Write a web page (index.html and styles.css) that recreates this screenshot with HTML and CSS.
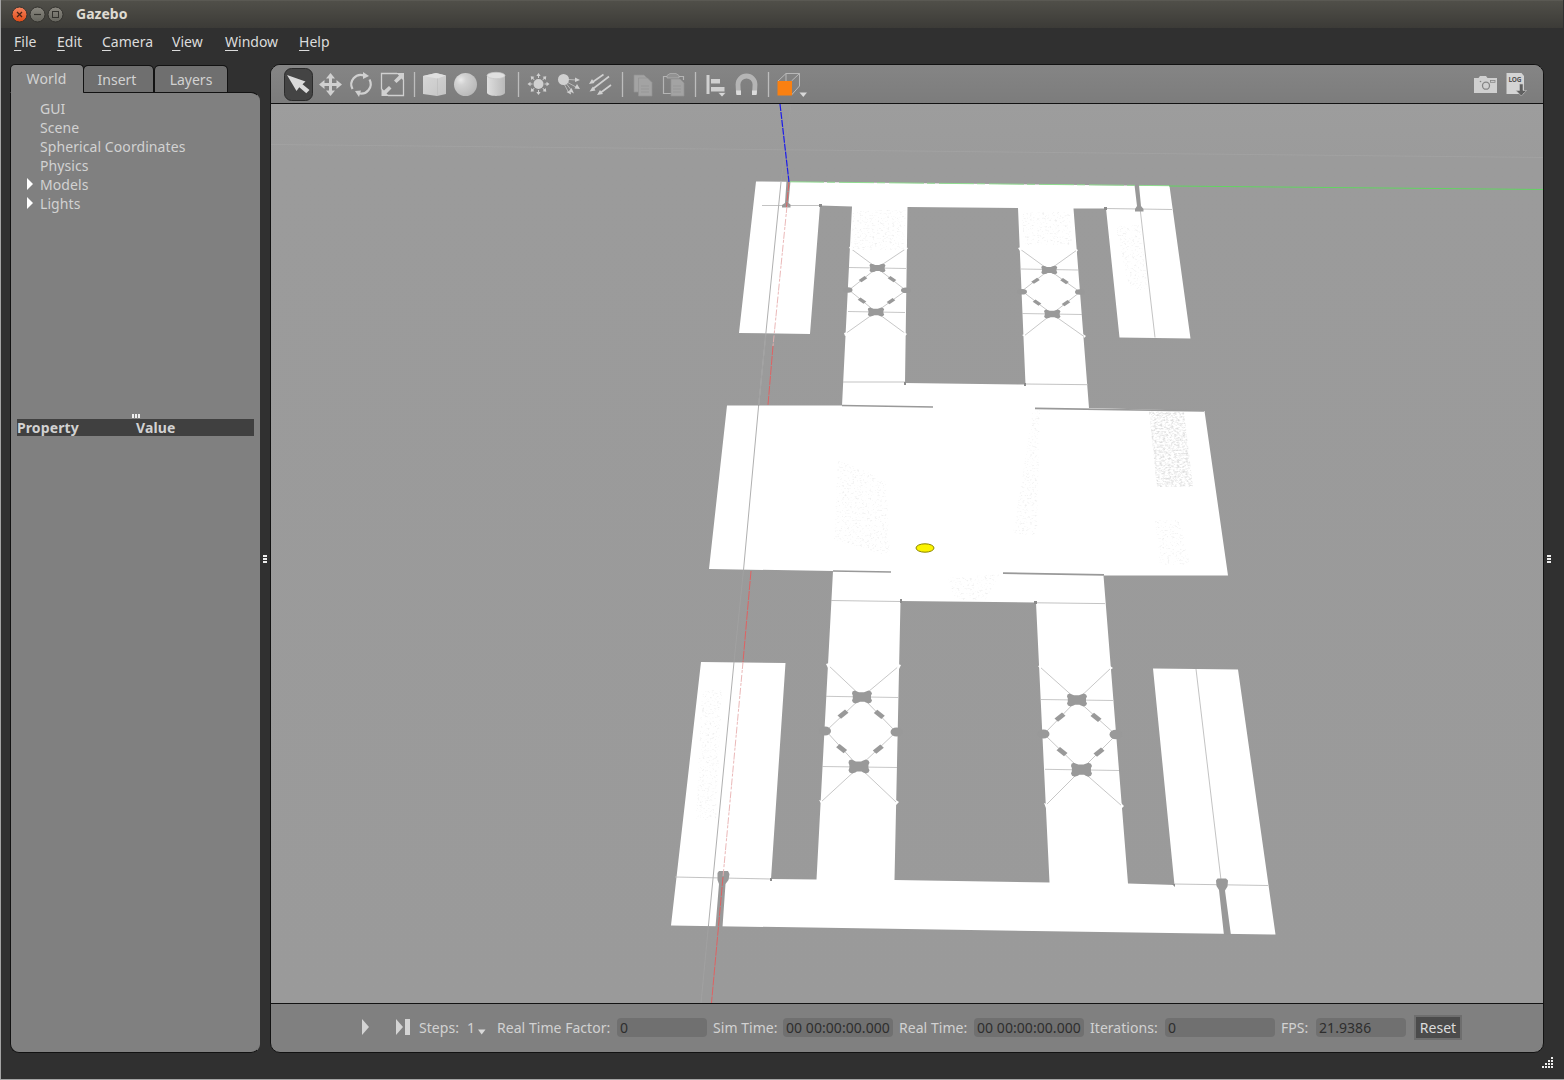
FILE: index.html
```html
<!DOCTYPE html>
<html lang="en">
<head>
<meta charset="utf-8">
<title>Gazebo</title>
<link rel="stylesheet" href="styles.css">
</head>
<body>
<div class="window">
  <header class="titlebar">
    <svg class="buttons" width="56" height="18" viewBox="0 0 56 18">
      <defs>
        <linearGradient id="close" x2="0" y2="1"><stop stop-color="#f58560"/><stop offset="1" stop-color="#df4a16"/></linearGradient>
        <linearGradient id="btn" x2="0" y2="1"><stop stop-color="#8a8880"/><stop offset="1" stop-color="#65645d"/></linearGradient>
      </defs>
      <circle cx="9.500" cy="9.500" r="7.500" fill="url(#close)" stroke="#33322e"/>
      <path d="M7 7l5 5M12 7l-5 5" stroke="#4a2417" stroke-width="1.300"/>
      <circle cx="27.500" cy="9.500" r="7.500" fill="url(#btn)" stroke="#33322e"/>
      <path d="M24 9.500h7" stroke="#33322e" stroke-width="1.200"/>
      <circle cx="45.500" cy="9.500" r="7.500" fill="url(#btn)" stroke="#33322e"/>
      <rect x="42.500" y="6.500" width="6" height="6" fill="none" stroke="#33322e"/>
    </svg>
    <span class="title">Gazebo</span>
  </header>
  <nav class="menubar">
    <span class="m-file"><u>F</u>ile</span><span class="m-edit"><u>E</u>dit</span><span class="m-camera"><u>C</u>amera</span><span class="m-view"><u>V</u>iew</span><span class="m-window"><u>W</u>indow</span><span class="m-help"><u>H</u>elp</span>
  </nav>
  <main class="workspace">
    <aside class="side">
      <div class="tabs">
        <div class="tab active">World</div>
        <div class="tab insert">Insert</div>
        <div class="tab layers">Layers</div>
      </div>
      <div class="panel">
        <ul class="tree">
          <li>GUI</li>
          <li>Scene</li>
          <li>Spherical Coordinates</li>
          <li>Physics</li>
          <li class="branch">Models</li>
          <li class="branch">Lights</li>
        </ul>
        <div class="grip-h"><i></i><i></i><i></i></div>
        <div class="props"><span class="p-name">Property</span><span class="p-value">Value</span></div>
      </div>
    </aside>
    <div class="splitter"><i></i><i></i><i></i></div>
    <section class="render">
      <div class="toolbar">
        <svg width="1272" height="38" viewBox="271 65 1272 38">
          <defs>
            <linearGradient id="cube" x2="1" y2="1"><stop stop-color="#d8d8d8"/><stop offset="1" stop-color="#c4c4c4"/></linearGradient>
            <radialGradient id="ball" cx=".3" cy=".3" r=".75"><stop stop-color="#e9e9e9"/><stop offset=".3" stop-color="#d2d2d2"/><stop offset="1" stop-color="#b9b9b9"/></radialGradient>
            <linearGradient id="cyl"><stop stop-color="#dedede"/><stop offset="1" stop-color="#b9b9b9"/></linearGradient>
          </defs>
          <!-- select -->
          <rect x="284.500" y="68.500" width="28" height="32" rx="7" fill="#444" stroke="#2b2b2b"/>
          <path d="M287 75l18.500 6.500-3 2.700 7 5.800-3.200 3.200-7-6-2.800 3.800z" fill="#d9d9d9"/>
          <g fill="#d0d0d0" stroke="none">
            <!-- translate -->
            <path d="M330.500 73l4.500 5.500h-3v4.500h4.500v-3l5.500 4.500-5.500 4.500v-3h-4.500v4.500h3l-4.500 5.500-4.500-5.500h3v-4.500h-4.500v3l-5.500-4.500 5.500-4.500v3h4.500v-4.500h-3z"/>
            <!-- rotate -->
            <path d="M352.500 89A9.500 9.500 0 0 1 364 75.500M369.500 79.500A9.500 9.500 0 0 1 358 93" fill="none" stroke="#d0d0d0" stroke-width="2.200"/>
            <path d="M363 72l6 4-6 3zM359 97l-4-6 6-.5z"/>
            <!-- scale -->
            <path d="M397 73.500h-15.500v16M388 95.500h15.500v-16" fill="none" stroke="#d0d0d0" stroke-width="1.300"/>
            <path d="M404 73v8l-2.500-2.500-5 4.500-2.500-2.500 5-5L396 73zM381.500 96v-8l2.500 2.500 5-4.500 2.500 2.500-5 5 3 2.500z"/>
          </g>
          <path d="M414.500 72v25M518.500 72v25M622.500 72v25M695.500 72v25M768.500 72v25" stroke="#bdbdbd" stroke-width="1.300"/>
          <!-- shapes -->
          <path d="M423 76l13-3 10 2.500v18.500l-9 2-14-2z" fill="url(#cube)"/>
          <path d="M423 76l14.500 2.500 8.500-3L436 73z" fill="#e0e0e0"/>
          <path d="M437.500 78.500v17.500" stroke="#bcbcbc" stroke-width=".7"/>
          <circle cx="465.500" cy="84.500" r="11.500" fill="url(#ball)"/>
          <path d="M487 75.500v17c0 4.500 18 4.500 18 0v-17z" fill="url(#cyl)"/>
          <ellipse cx="496" cy="75.500" rx="9" ry="3.200" fill="#e0e0e0" stroke="#c6c6c6" stroke-width=".7"/>
          <!-- lights -->
          <g fill="#d0d0d0">
            <circle cx="538.500" cy="84" r="5"/>
            <path id="ray" d="M538 78v-2h-1.700l2.200-3 2.200 3H539v2z"/>
            <use href="#ray" transform="rotate(45 538.500 84)"/><use href="#ray" transform="rotate(90 538.500 84)"/><use href="#ray" transform="rotate(135 538.500 84)"/>
            <use href="#ray" transform="rotate(180 538.500 84)"/><use href="#ray" transform="rotate(225 538.500 84)"/><use href="#ray" transform="rotate(270 538.500 84)"/><use href="#ray" transform="rotate(315 538.500 84)"/>
            <circle cx="563.500" cy="79.500" r="5.500"/>
            <path d="M563 79l13 1M565 81l11 6M565 82l7 9M563 82l6 11" stroke="#d0d0d0" stroke-width=".7"/>
            <path d="M575 77.500l5 2.500-5 2zM577 84l3 5-5.500-.5zM571.500 88l2.500 5.500-5-2.500zM566.500 92l4-1.500.5 4z"/>
            <path d="M603.500 74.500L592 82.500M609 76.500L592 89.500M611 85l-11.500 8.500" stroke="#d0d0d0" stroke-width="1.600"/>
            <path d="M589 84l3-5 2.500 4zM589.500 91.500l3.500-5 2.500 4zM597 95l3-5 3 4z"/>
          </g>
          <!-- copy and paste -->
          <g fill="#a3a3a3" stroke="#929292" stroke-width=".7">
            <path d="M634 75h10l3 3v14h-13z"/><path d="M638.500 78h9l4.500 4.500V96h-13.500z"/>
            <path d="M641 86h8M641 89h8M641 92h8" />
            <path d="M672 93.500h-8.500V76.500h20V80" fill="none" stroke="#b5b5b5" stroke-width="1.200"/>
            <path d="M667 78v-2.500l3-2h6l3 2V78z" fill="#929292" stroke="#b5b5b5"/>
            <path d="M671 79h9l4 4v13h-13z"/><path d="M673 86h8M673 89h8M673 92h8"/>
          </g>
          <!-- align and snap -->
          <path d="M706.500 75h3v19h-3zM711 79h9v4.500h-9zM711 87h13.500v4.500H711z" fill="#d0d0d0"/>
          <path d="M718 92.500h8l-4 4.500z" fill="#d8d8d8" stroke="#777" stroke-width=".6"/>
          <path d="M738.500 94l-.5-9.500a8.500 8.500 0 0 1 17 0l-.5 9.500" fill="none" stroke="#b5b5b5" stroke-width="4.800"/>
          <path d="M736 90.500h5v4.500h-4.500zM752 90.500h5l-.5 4.500H752z" fill="#dcdcdc"/>
          <!-- view angle -->
          <path d="M778 81l8-7.500h13.500V86l-8 9M791.500 81l8-7.500M786 73.500V81" fill="none" stroke="#b8b8b8"/>
          <rect x="777.500" y="81" width="14.500" height="14.500" fill="#fa8011"/>
          <path d="M799.500 92.500h7.500l-3.700 4.500z" fill="#d8d8d8"/>
          <!-- screenshot -->
          <path d="M1474 78h4.500l1.500-2h6l1.500 2h9.500v15h-23z" fill="#d0d0d0"/>
          <circle cx="1486" cy="85.700" r="3.500" fill="none" stroke="#858585" stroke-width="1.300"/>
          <rect x="1490.500" y="80.500" width="4.500" height="1.800" fill="none" stroke="#858585" stroke-width=".8"/><circle cx="1480.500" cy="81.500" r=".8" fill="#858585"/>
          <!-- log -->
          <path d="M1506.500 73h15l2.500 3v18h-17.500z" fill="#d4d4d4"/>
          <text x="1508.500" y="82" class="log" textLength="13">LOG</text>
          <path d="M1519.500 84h3.500v6.500h3.500l-5.200 5.500-5.300-5.500h3.500z" fill="#606060" stroke="#c4c4c4" stroke-width=".6"/>
        </svg>
      </div>
      <svg class="scene" width="1272" height="899" viewBox="271 104 1272 899">
        <defs>
          <linearGradient id="sky" x2="0" y2="1"><stop stop-color="#9d9d9d"/><stop offset=".06" stop-color="#9b9b9b"/><stop offset="1" stop-color="#9a9a9a"/></linearGradient>
          <path id="pillar" d="M-9.500-5.500l2-1 2.500 1 2 .8h5l2-.8 2.500-1 2.500 1 1 2-1 2v3l1 2-1 2-2.500 1-2.500-1-1.500-.8h-4.500l-1.500.8-3 1-2.500-1-1-2 .8-2v-3l-.8-2z"/>
          <path id="brick" d="M-5.500 1.500L2-4.500 5.500-1.200-2 4.800z"/>
          <path id="brick-r" d="M5.500 1.500L-2-4.500-5.500-1.200 2 4.800z"/>
          <filter id="grain" x="0" y="0" width="1" height="1"><feTurbulence type="fractalNoise" baseFrequency=".35 .6" numOctaves="3" seed="4"/><feColorMatrix values="0 0 0 0 .6  0 0 0 0 .6  0 0 0 0 .6  2.800 0 0 0 -1.150"/><feComposite in2="SourceGraphic" operator="in"/></filter>
          <filter id="dust" x="0" y="0" width="1" height="1"><feTurbulence type="fractalNoise" baseFrequency=".4 .6" numOctaves="2" seed="9"/><feColorMatrix values="0 0 0 0 .7  0 0 0 0 .7  0 0 0 0 .7  4 0 0 0 -2.250"/><feComposite in2="SourceGraphic" operator="in"/></filter>
        </defs>
        <rect x="271" y="104" width="1272" height="899" fill="url(#sky)"/>
        <path d="M271 144.500L1543 157.500" stroke="#a3a3a3" stroke-width=".8"/>
        <path d="M791 104L781 182" stroke="#a0a0a0" stroke-width=".8"/>
        <!-- floor slab with two courtyards -->
        <path fill="#fff" fill-rule="evenodd" d="M756 181.500L1169.500 186 1190.500 338.500 1119.500 337.500 1106 208.500H1073.500L1089 408 1204.500 411 1228 575.500 1103.500 575.500 1128 883.500 1174.500 885 1153 668.500 1238 669.500 1275.500 934.500 671 925.500 701 662 785.500 663 771 879 816.500 879.500 833 571 709 569 727 405.500 842 405.500 852 206.500 820 205.500 810 334 739 333z
          M907.500 207L1018 208 1025.500 384.500 905 383z M900.500 601L1036 602.500 1049.500 882.500 894.500 880z"/>
        <path filter="url(#grain)" fill="#fff" opacity=".62" d="M1149 411.500L1184 412 1193 487H1157z"/>
        <g filter="url(#dust)" fill="#fff" opacity=".4">
          <path d="M1033 410H1040L1037 535H1013z"/><path d="M838 460L886 480 890 556 834 540z"/><path d="M853 210L906 210 904 250H851z"/><path d="M948 578L1000 574 985 600H955z"/><path d="M702 690L722 690 716 820H696z"/><path d="M1155 520L1180 520 1190 565H1160z"/><path d="M1115 225L1140 225 1148 290H1130z"/><path d="M1022 212L1070 212 1072 245H1024z"/>
        </g>
        <g stroke="#999" fill="none" stroke-width="1.700">
          <path d="M842 405.500L933 407M1035 408.300L1204 411M833 571L891 572M1003 573.200L1104 574.800"/>
        </g>
        <g stroke="#bcbcbc" fill="none" stroke-width=".9">
          <path d="M843 382H905M1025 384L1088 384.700M831 600.500L900 601.500M1037 602.800L1105 603.600M762 205.500H820M1106 208.500L1172 209.500M675 877L771 879M1174 884L1268 885.500"/>
          <path d="M1140 208L1155 337.500M1196 669L1221 880"/>
        </g>
        <g fill="#8c8c8c"><path d="M819 204h3v3h-3zM1104 207h3v3h-3zM904 382h2v3h-2zM1024 383h2v3h-2zM900 599h2v4h-2zM1034 601h3v3h-3zM770 878h2v3h-2zM1172 884h3v3z"/></g>
        <!-- seams around the columns -->
        <g stroke="#bdbdbd" fill="none" stroke-width=".85">
          <path d="M850 248L877 268 907 248M849 267.500L906 268.500M877 268L849 290 876 312 906 290.500zM848 311.500L905 312.500M845 334L876 312 906 334"/>
          <path d="M1020 249L1049 270 1077 250M1021 269L1078 270M1049 270L1022 291 1052 314 1080 292zM1022 313.500L1082 314.500M1024 336L1052 314 1084 336.500"/>
          <path d="M828 665L862 697 899 666M826 696.300L898 697.500M862 697L826 731 859 767 896 732zM822 766.500L897 767.500M821 802L859 767 896 802"/>
          <path d="M1040 667L1077 700 1111 668M1041 699.500L1113 700.500M1077 700L1044 734 1081 770 1116 735zM1045 769.300L1119 770.500M1046 805L1081 770 1122 806"/>
        </g>
        <g fill="#fff">
          <path d="M849 247l3-1 2 3-3 2zM905 247l3 1-2 3-2-1zM844 333l3-1 1 3-3 1zM904 332l3 2-2 2-2-2zM1018 248l3-1 1 3-2 1zM1076 249l2 1-2 3zM1022 335l3-1v3zM1083 334l3 2-2 2zM826 664l3-1 2 3-3 2zM898 664l3 1-2 4-2-1zM819 800l3 1v4zM896 800l3 2-3 3zM1038 666l3-1v5zM1110 666l3 2-3 2zM1044 803l3 1-1 4zM1121 803l3 3-3 3z"/>
        </g>
        <g fill="#999">
          <use href="#pillar" transform="translate(877.500 268) scale(.8 .66)"/><use href="#pillar" transform="translate(876 312) scale(.82 .68)"/>
          <use href="#pillar" transform="translate(1049.300 270) scale(.8 .66)"/><use href="#pillar" transform="translate(1052.300 314) scale(.82 .68)"/>
          <use href="#pillar" transform="translate(862 697)"/><use href="#pillar" transform="translate(859 766.500) scale(1.050 1.080)"/>
          <use href="#pillar" transform="translate(1077 700)"/><use href="#pillar" transform="translate(1081.500 769.700) scale(1.050 1.080)"/>
          <use href="#brick" transform="translate(863 279) scale(.78 .66)"/><use href="#brick-r" transform="translate(892 279) scale(.78 .66)"/><use href="#brick-r" transform="translate(862 300.500) scale(.78 .66)"/><use href="#brick" transform="translate(891 301) scale(.78 .66)"/>
          <use href="#brick" transform="translate(1035.500 280.700) scale(.78 .66)"/><use href="#brick-r" transform="translate(1064.500 281) scale(.78 .66)"/><use href="#brick-r" transform="translate(1037 302.500) scale(.78 .66)"/><use href="#brick" transform="translate(1066 303) scale(.78 .66)"/>
          <use href="#brick" x="843" y="714"/><use href="#brick-r" x="879.300" y="714.300"/><use href="#brick-r" x="841.600" y="748.500"/><use href="#brick" x="878.300" y="749"/>
          <use href="#brick" x="1060" y="717"/><use href="#brick-r" x="1096" y="717.300"/><use href="#brick-r" x="1062" y="751.500"/><use href="#brick" x="1099" y="752"/>
          <ellipse cx="848" cy="290" rx="4.500" ry="2.800"/><ellipse cx="906" cy="290.300" rx="5" ry="2.800"/><ellipse cx="1022" cy="291.700" rx="5" ry="2.800"/><ellipse cx="1080" cy="292" rx="5" ry="2.800"/>
          <ellipse cx="825" cy="731" rx="6" ry="4.500"/><ellipse cx="896.500" cy="732" rx="6" ry="4.500"/><ellipse cx="1043.500" cy="734" rx="6" ry="4.500"/><ellipse cx="1116" cy="734.500" rx="6.500" ry="4.800"/>
          <!-- door slots -->
          <path d="M786.500 181L790.500 181 788.500 203 790.500 204.500V207.500H782V205L785 203z"/>
          <path d="M1134.500 185L1139 185 1141 206 1143.500 209V211.500H1135V209L1137 206z"/>
          <path d="M717.500 873l1.500-2h9l1.500 3-1 6-3 4L722.500 927H715.500L719 884l-1.500-4z"/>
          <path d="M1216 880.500l1.500-2h8.500l2 2-.5 6-2.500 4L1231 935.500H1224L1219 890l-2.500-4z"/>
        </g>
        <!-- world axes -->
        <path d="M781 182L758.500 407M758.500 407L743.500 570M734 662L708.500 925" stroke="#b0b0b0"/>
        <path d="M766 334L758.500 406M743.500 570L734 662M708.500 925L701 1003" stroke="#a1a1a1"/>
        <path d="M787 206L773 346M743 662L723 877" stroke="#e8b0b0" stroke-width=".9" stroke-dasharray="7 1 3 2"/>
        <path d="M789 182L786.500 207M773 346L768 405M751 571L743 662M723 877L711.500 1003" stroke="#df6262" stroke-dasharray="9 1"/>
        <path d="M789 181.800L1169 185.700" stroke="#8fdc8f" stroke-width="1" stroke-dasharray="35 3 8 4"/>
        <path d="M1169 186L1543 189.500" stroke="#62d462" stroke-width="1"/>
        <path d="M780 104L789 182" stroke="#1b1bea" stroke-width="1.200" stroke-dasharray="7 1"/>
        <ellipse cx="925" cy="548" rx="9" ry="4.200" fill="#fbf300" stroke="#8c8500"/>
      </svg>
      <footer class="timebar">
        <svg width="50" height="16" viewBox="0 0 50 16" fill="#d4d4d4"><path d="M1 0l7 8L1 16zM35 0l7 8L35 16zM44 0h5v16h-5z"/></svg>
        <span class="lbl steps">Steps:</span><span class="lbl one">1</span>
        <svg class="drop" width="9" height="6" viewBox="0 0 9 6"><path d="M0 .5h7.500L3.700 5.500z" fill="#d8d8d8"/></svg>
        <span class="lbl rtf">Real Time Factor:</span><span class="field w90">0</span>
        <span class="lbl sim">Sim Time:</span><span class="field w110">00 00:00:00.000</span>
        <span class="lbl real">Real Time:</span><span class="field w110">00 00:00:00.000</span>
        <span class="lbl iter">Iterations:</span><span class="field w110">0</span>
        <span class="lbl fps">FPS:</span><span class="field w90">21.9386</span>
        <button class="reset">Reset</button>
      </footer>
    </section>
    <div class="splitter right"><i></i><i></i><i></i></div>
  </main>
  <div class="statusbar"><svg width="12" height="12" viewBox="0 0 12 12" fill="#eee"><path d="M9 1h2v2H9zM6 4h2v2H6zM9 4h2v2H9zM3 7h2v2H3zM6 7h2v2H6zM9 7h2v2H9zM0 10h2v2H0zM3 10h2v2H3zM6 10h2v2H6zM9 10h2v2H9z"/></svg></div>
</div>
</body>
</html>
```
FILE: styles.css
```css
* { box-sizing: border-box; }
body { margin: 0; overflow: hidden; background: #a4a4a4; font: 14px "Noto Sans", "Open Sans", sans-serif; color: #d2d2d2; }
.window { width: 1564px; height: 1080px; padding: 0 1px 1px 0; display: flex; flex-direction: column; background: #303030; border: solid #a4a4a4; border-width: 0 0 1px 1px; }
.titlebar { height: 28px; flex: none; display: flex; align-items: center; padding-left: 9px; background: linear-gradient(#504f49, #3c3b37); border-top: 1px solid #5a5953; }
.buttons { flex: none; display: block; margin-top: -1px; }
.title { margin: -2px 0 0 10px; font-weight: 700; color: #dfdbd2; }
.menubar { height: 36px; flex: none; padding-left: 13px; display: flex; line-height: 28px; color: #dcdcdc; white-space: nowrap; }
.menubar u { text-underline-offset: 3px; text-decoration-thickness: 1px; }
.m-file { width: 43px; } .m-edit { width: 45px; } .m-camera { width: 70px; } .m-view { width: 53px; } .m-window { width: 74px; }
.workspace { flex: none; height: 989px; display: flex; padding-left: 9px; }
.side { width: 250px; display: flex; flex-direction: column; }
.tabs { height: 29px; display: flex; align-items: flex-end; position: relative; z-index: 1; }
.tab { height: 28px; padding-top: 1px; line-height: 25px; text-align: center; background: #6f6f6f; border: 1px solid #121212; border-bottom-color: transparent; border-radius: 5px 5px 0 0; background-clip: padding-box; }
.tab.active { width: 74px; height: 29px; line-height: 27px; margin-right: -1px; padding: 0 1px 0 0; background: #808080; border-bottom-color: #808080; letter-spacing: .15px; }
.tab.insert { width: 71px; padding-right: 3px; }
.tab.layers { width: 74px; }
.panel { flex: 1; margin-top: -1px; background: #808080; border: 1px solid #121212; border-right-color: #808080; border-radius: 0 9px 9px 9px; padding: 6px 5px 0 6px; }
.tree { list-style: none; margin: 0; padding: 0 0 0 23px; height: 314px; line-height: 19px; letter-spacing: .08px; }
.tree li { position: relative; }
.branch::before { content: ""; position: absolute; left: -13px; top: 3px; border: solid transparent; border-width: 6px 0 6px 6px; border-left-color: #fff; }
.grip-h { height: 6px; display: flex; justify-content: center; gap: 1px; padding: 1px 0; }
.grip-h i { width: 2px; height: 4px; background: #eee; }
.props { height: 17px; background: #404040; font-weight: 700; line-height: 18px; display: flex; letter-spacing: .1px; }
.p-name { width: 119px; }
.splitter { width: 10px; display: flex; flex-direction: column; align-items: center; justify-content: center; gap: 1px; }
.splitter i { width: 4px; height: 2px; background: #eee; }
.splitter.right { width: 9px; }
.render { width: 1274px; border: 1px solid #121212; border-radius: 10px; overflow: hidden; display: flex; flex-direction: column; background: #808080; }
.toolbar { height: 39px; border-bottom: 1px solid #121212; background: linear-gradient(#858585, #7c7c7c); }
.toolbar svg, .scene { display: block; }
.log { font: 700 6.500px "Noto Sans", sans-serif; fill: #555; }
.timebar { flex: 1; border-top: 1px solid #121212; display: flex; align-items: center; padding: 0 0 2px 90px; white-space: nowrap; }
.timebar svg, .timebar span { flex: none; }
.lbl { line-height: 19px; letter-spacing: .04px; }
.steps { margin-left: 8px; width: 48px; }
.one { width: 11px; }
.timebar .drop { margin-top: 9px; }
.rtf { margin-left: 10px; width: 120px; }
.sim, .real, .iter, .fps { margin-left: 6px; }
.sim { width: 70px; } .real { width: 75px; } .iter { width: 75px; } .fps { width: 35px; }
.field { height: 19px; line-height: 19px; padding-left: 3px; border-radius: 4px; background: #707070; color: #2e2e2e; letter-spacing: .06px; }
.w90 { width: 90px; } .w110 { width: 110px; }
.reset { margin-left: 8px; width: 48px; height: 25px; padding: 0; font: inherit; color: #dcdcdc; background: #4b4b4b; border: 2px solid #6e6e6e; }
.statusbar { flex: 1; display: flex; justify-content: flex-end; padding: 3px 9px 0 0; }
```
